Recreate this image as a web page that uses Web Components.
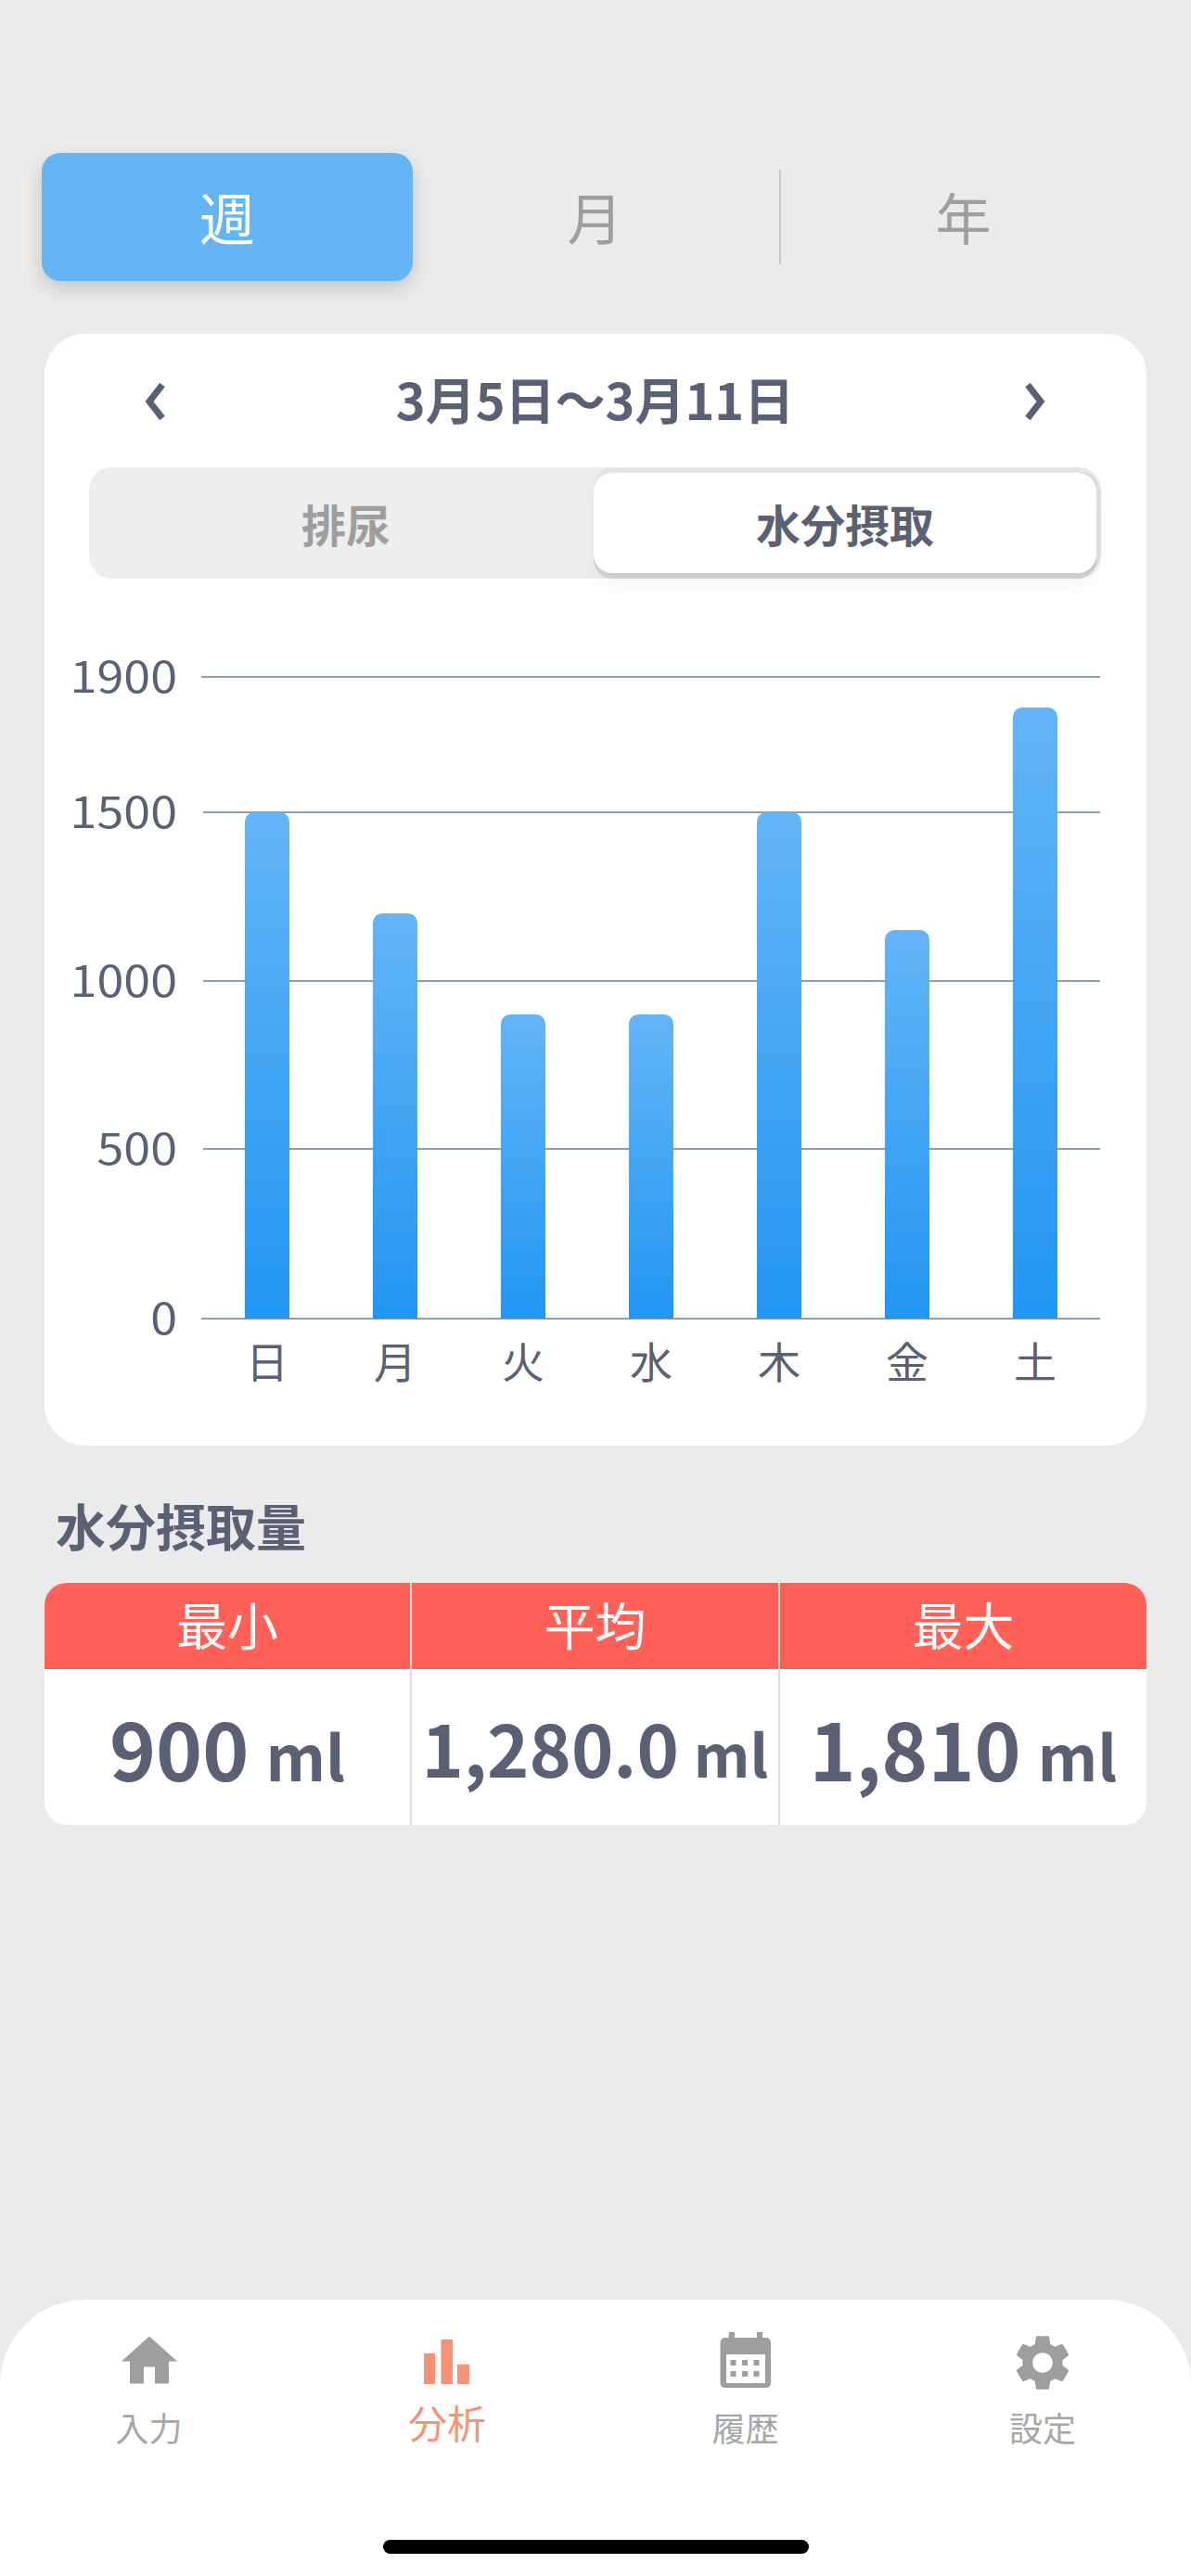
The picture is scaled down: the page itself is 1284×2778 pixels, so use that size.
<!DOCTYPE html>
<html lang="ja">
<head>
<meta charset="utf-8">
<title>分析</title>
<style>
  html, body { margin: 0; background: #ebebeb; }
  body { font-family: "Noto Sans CJK JP", "Noto Sans", sans-serif; }
</style>
</head>
<body>
<water-app>
  <period-tabs></period-tabs>
  <chart-card title-text="3月5日〜3月11日"></chart-card>
  <stat-table heading="水分摂取量"></stat-table>
  <tab-bar></tab-bar>
</water-app>

<script>
/* eslint-env browser */
/* global customElements */

const FONT = '"Noto Sans CJK JP", "Noto Sans", sans-serif'
const INK = '#5a6175'

customElements.define(
  'water-app',
  class WaterApp extends HTMLElement {
    constructor() {
      super()
      this.attachShadow({ mode: 'open' })
      this.shadowRoot.innerHTML = `
        <style>
          :host {
            display: flex;
            flex-direction: column;
            box-sizing: border-box;
            height: 2778px;
            padding-top: 165px;
            background: #ebebeb;
            font-family: ${FONT};
          }
        </style>
        <slot></slot>
      `
    }
  }
)

customElements.define(
  'period-tabs',
  class PeriodTabs extends HTMLElement {
    constructor() {
      super()
      this.attachShadow({ mode: 'open' })
      this.shadowRoot.innerHTML = `
        <style>
          :host {
            display: grid;
            grid-template-columns: 398px 399px 397px;
            height: 138px;
            margin: 0 45px;
            font-size: 60px;
            color: #9e9e9e;
          }
          div {
            display: flex;
            align-items: center;
            justify-content: center;
            box-sizing: border-box;
            padding-bottom: 4px;
            border-radius: 20px;
          }
          .on {
            width: 400px;
            background: #64b5f6;
            color: #fff;
            box-shadow: 0 8px 20px rgba(0, 0, 0, 0.16);
          }
          .rule {
            position: relative;
            padding-right: 2px;
          }
          .last {
            padding-right: 4px;
          }
          .rule::after {
            content: '';
            position: absolute;
            right: 0;
            top: 18px;
            bottom: 18px;
            width: 2px;
            background: #c8c8c8;
          }
        </style>
        <div class="on">週</div>
        <div class="rule">月</div>
        <div class="last">年</div>
      `
    }
  }
)

customElements.define(
  'chart-card',
  class ChartCard extends HTMLElement {
    constructor() {
      super()
      this.attachShadow({ mode: 'open' })
      this.shadowRoot.innerHTML = `
        <style>
          :host {
            display: block;
            box-sizing: border-box;
            height: 1199px;
            margin: 57px 48px 0;
            padding-top: 40px;
            background: #fff;
            border-radius: 44px;
          }
          .range {
            display: flex;
            align-items: center;
            justify-content: space-between;
            height: 58px;
            padding: 0 107px 0 106px;
            font-size: 54px;
            font-weight: 700;
            color: ${INK};
          }
          svg {
            width: 26px;
            height: 40px;
            margin-top: 8px;
            fill: none;
            stroke: ${INK};
            stroke-width: 7;
          }
          .kind {
            display: flex;
            box-sizing: border-box;
            height: 120px;
            margin: 46px 49px 0 48px;
            padding: 6px 5px 6px 10px;
            background: #eee;
            border-radius: 24px;
            font-size: 48px;
            font-weight: 700;
            color: #9e9e9e;
          }
          .kind div {
            flex: 1;
            display: flex;
            align-items: center;
            justify-content: center;
            border-radius: 20px;
          }
          .kind .on {
            flex: none;
            width: 542px;
            background: #fff;
            color: ${INK};
            box-shadow: 0 6px 0 0 rgba(0, 0, 0, 0.1), 5px 0 0 0 rgba(0, 0, 0, 0.05),
              0 -6px 0 0 rgba(0, 0, 0, 0.03), 0 12px 26px rgba(0, 0, 0, 0.05);
          }
          water-chart {
            margin-top: 105px;
          }
        </style>
        <div class="range">
          <svg viewBox="0 0 26 40"><path d="M21 2 7 20l14 18"/></svg>
          <span>${this.getAttribute('title-text')}</span>
          <svg viewBox="0 0 26 40"><path d="M5 2l14 18L5 38"/></svg>
        </div>
        <div class="kind">
          <div>排尿</div>
          <div class="on">水分摂取</div>
        </div>
        <water-chart></water-chart>
      `
    }
  }
)

customElements.define(
  'water-chart',
  class WaterChart extends HTMLElement {
    constructor() {
      super()
      this.attachShadow({ mode: 'open' })
      const rows = [
        ['1900', 146, 26],
        ['1500', 182, 28],
        ['1000', 181, 28],
        ['500', 183, 28],
        ['0', 0, 26]
      ]
      const values = [1500, 1200, 900, 900, 1500, 1150, 1810]
      const days = ['日', '月', '火', '水', '木', '金', '土']
      this.shadowRoot.innerHTML = `
        <style>
          :host {
            display: block;
            position: relative;
            font-size: 46px;
            color: ${INK};
          }
          .row {
            display: flex;
            align-items: flex-start;
          }
          .tick {
            flex: none;
            width: 143px;
            height: 0;
            margin-top: -2px;
            line-height: 0;
            text-align: right;
            transform: scaleX(1.13);
            transform-origin: right;
          }
          .line {
            flex: 1;
            height: 2px;
            margin-right: 50px;
            background: #8c9eaf;
          }
          .bars {
            position: absolute;
            left: 171px;
            top: 0;
            width: 966px;
            height: 693px;
            display: grid;
            grid-template-columns: repeat(7, 138px);
            justify-items: center;
            align-items: end;
          }
          .bar {
            width: 48px;
            border-radius: 10px 10px 0 0;
            background: linear-gradient(#64b5f6, #2196f3);
          }
          .days {
            display: grid;
            grid-template-columns: repeat(7, 138px);
            margin: 21px 0 0 171px;
            line-height: 48px;
            text-align: center;
          }
        </style>
        ${rows
          .map(
            ([label, gap, left]) =>
              `<div class="row" style="height:${gap}px"><div class="tick">${label}</div><div class="line" style="margin-left:${left}px"></div></div>`
          )
          .join('')}
        <div class="bars">
          ${values.map((v) => `<div class="bar" style="height:${Math.round(v * 0.364)}px"></div>`).join('')}
        </div>
        <div class="days">
          ${days.map((d) => `<div>${d}</div>`).join('')}
        </div>
      `
    }
  }
)

customElements.define(
  'stat-table',
  class StatTable extends HTMLElement {
    constructor() {
      super()
      this.attachShadow({ mode: 'open' })
      this.shadowRoot.innerHTML = `
        <style>
          :host {
            display: block;
            margin: 52px 48px 0;
          }
          h2 {
            margin: 0 0 29px 12px;
            font-size: 54px;
            line-height: 67px;
            font-weight: 700;
            color: ${INK};
          }
          .grid {
            display: grid;
            grid-template-columns: 396px 397px 395px;
            grid-template-rows: 93px 168px;
            border-radius: 24px;
            overflow: hidden;
            background: #fff;
          }
          .head {
            display: flex;
            align-items: center;
            justify-content: center;
            padding-bottom: 8px;
            background: #ff6057;
            color: #fff;
            font-size: 55px;
          }
          .cell {
            display: flex;
            align-items: baseline;
            justify-content: center;
            gap: 18px;
            color: ${INK};
            font-weight: 700;
            line-height: 168px;
            white-space: nowrap;
          }
          .line { border-right: 2px solid #dedede; }
          .big { font-size: 85px; }
          .big small { font-size: 67px; }
          .mid { font-size: 77px; gap: 16px; }
          .mid small { font-size: 63px; }
        </style>
        <h2>${this.getAttribute('heading')}</h2>
        <div class="grid">
          <div class="head line">最小</div>
          <div class="head line">平均</div>
          <div class="head">最大</div>
          <div class="cell big line"><span>900</span><small>ml</small></div>
          <div class="cell mid line"><span>1,280.0</span><small>ml</small></div>
          <div class="cell big"><span>1,810</span><small>ml</small></div>
        </div>
      `
    }
  }
)

customElements.define(
  'tab-bar',
  class TabBar extends HTMLElement {
    constructor() {
      super()
      this.attachShadow({ mode: 'open' })
      this.shadowRoot.innerHTML = `
        <style>
          :host {
            display: block;
            position: relative;
            box-sizing: border-box;
            height: 298px;
            margin-top: auto;
            padding-top: 32px;
            background: #fff;
            border-radius: 92px 92px 0 0;
          }
          .items {
            display: grid;
            grid-template-columns: 321px 322px 321px 320px;
          }
          .item {
            display: flex;
            flex-direction: column;
            align-items: center;
            font-size: 36px;
            line-height: 44px;
            color: #a6a6a6;
          }
          .icon {
            display: block;
            width: 72px;
            height: 72px;
            fill: #9e9e9e;
            margin-bottom: 11px;
          }
          .active {
            color: #fa9075;
            font-size: 42px;
          }
          .active .icon {
            width: 84px;
            height: 84px;
            fill: #fa9075;
            margin: -7px 0 1px;
          }
          .home {
            position: absolute;
            left: 413px;
            bottom: 24px;
            width: 459px;
            height: 15px;
            border-radius: 8px;
            background: #000;
          }
        </style>
        <div class="items">
          <div class="item">
            <svg class="icon" viewBox="0 0.5 24 24"><path d="M10 20v-6h4v6h5v-8h3L12 3 2 12h3v8z"/></svg>
            入力
          </div>
          <div class="item active">
            <svg class="icon" viewBox="0 0 84 84"><path d="M17 33h12v33H17zM35.500 18H48v48H35.500zM53 45h13v21H53z"/></svg>
            分析
          </div>
          <div class="item">
            <svg class="icon" viewBox="-8.500 -3 72 72"><path fill-rule="evenodd" d="M9.500 0h6v6h24V0h6v6h4a5 5 0 0 1 5 5v44a5 5 0 0 1-5 5H5a5 5 0 0 1-5-5V11a5 5 0 0 1 5-5h4zM6.500 24v31h42V24zM11 30h6v6h-6zM23.500 30h6v6h-6zM36 30h6v6h-6zM11 42h6v6h-6zM23.500 42h6v6h-6zM36 42h6v6h-6z"/></svg>
            履歴
          </div>
          <div class="item">
            <svg class="icon" viewBox="0 0 24 24"><path d="M19.140 12.940c.04-.3.06-.61.06-.94 0-.32-.02-.64-.07-.94l2.030-1.580c.18-.14.23-.41.12-.61l-1.920-3.320c-.12-.22-.37-.29-.59-.22l-2.390.96c-.5-.38-1.030-.7-1.620-.94L14.400 2.810c-.04-.24-.24-.41-.48-.41h-3.840c-.24 0-.43.17-.47.41L9.250 5.350c-.59.24-1.130.57-1.620.94l-2.390-.96c-.22-.08-.47 0-.59.22L2.740 8.870c-.12.21-.08.47.12.61l2.030 1.580c-.05.3-.09.63-.09.94s.02.64.07.94l-2.030 1.580c-.18.14-.23.41-.12.61l1.920 3.320c.12.22.37.29.59.22l2.390-.96c.5.38 1.030.7 1.620.94l.36 2.540c.05.24.24.41.48.41h3.840c.24 0 .44-.17.47-.41l.36-2.540c.59-.24 1.130-.56 1.620-.94l2.390.96c.22.08.47 0 .59-.22l1.920-3.320c.12-.22.07-.47-.12-.61l-2.010-1.580zM12 15.600c-1.980 0-3.600-1.620-3.600-3.600s1.620-3.600 3.600-3.600 3.600 1.620 3.600 3.600-1.620 3.600-3.600 3.600z"/></svg>
            設定
          </div>
        </div>
        <div class="home"></div>
      `
    }
  }
)
</script>
</body>
</html>
